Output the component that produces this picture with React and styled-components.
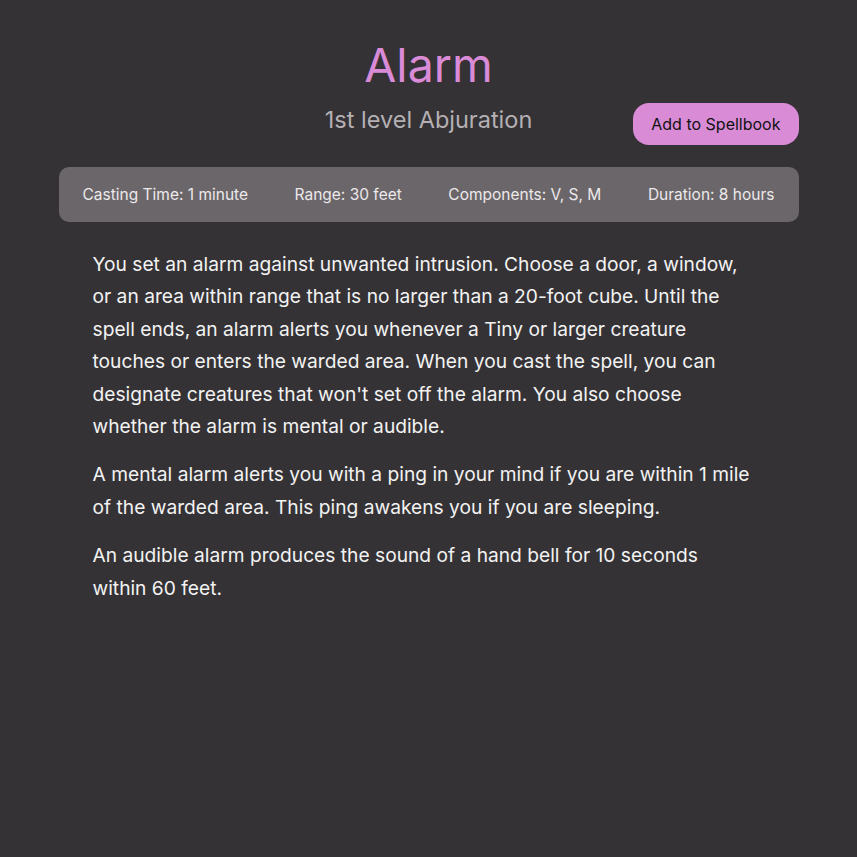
import styled, { createGlobalStyle } from 'styled-components';

const GlobalStyle = createGlobalStyle`
    body {
        margin: 0;
        background-color: #353236;
        font-family: 'Inter', 'Liberation Sans', sans-serif;
        color: #f2f2f2;
    }
`

const Page = styled.div`
    max-width: 740px;
    margin: 0 auto;
    padding-top: 36px;
`
const Header = styled.header`
    display: grid;
    grid-template-columns: 1fr auto 1fr;
    grid-template-rows: auto auto;
`
const Title = styled.h1`
    grid-column: 2;
    margin: 0;
    font-size: 46.5px;
    font-weight: 400;
    color: #da8bd7;
    text-align: center;
    line-height: 58px;
`
const Subtitle = styled.h2`
    grid-column: 2;
    grid-row: 2;
    margin: 12px 0 0;
    font-size: 23.5px;
    line-height: 28px;
    font-weight: 400;
    color: #b4b0b3;
    text-align: center;
`
const AddButton = styled.button`
    grid-column: 3;
    grid-row: 2;
    justify-self: end;
    align-self: start;
    margin-top: 9px;
    height: 42px;
    padding: 0 18px;
    border: 0;
    border-radius: 16px;
    background-color: #d98bd6;
    color: #111;
    font-family: inherit;
    font-size: 16px;
    cursor: pointer;
`
const Stats = styled.div`
    display: flex;
    justify-content: space-between;
    align-items: center;
    height: 55px;
    margin-top: 22px;
    padding: 0 24px;
    border-radius: 10px;
    background-color: #6b6669;
    font-size: 15.5px;
    color: #ece9eb;
`
const Description = styled.div`
    padding: 26px 44px 0 34px;

    p {
        margin: 0 0 16px;
        font-size: 19.2px;
        line-height: 32.4px;
    }
`

const stats = [
    'Casting Time: 1 minute',
    'Range: 30 feet',
    'Components: V, S, M',
    'Duration: 8 hours',
]

function App() {
    return (
        <>
            <GlobalStyle />
            <Page>
                <Header>
                    <Title>Alarm</Title>
                    <Subtitle>1st level Abjuration</Subtitle>
                    <AddButton>Add to Spellbook</AddButton>
                </Header>
                <Stats>
                    {stats.map((s) => (
                        <span key={s}>{s}</span>
                    ))}
                </Stats>
                <Description>
                    <p>You set an alarm against unwanted intrusion. Choose a door, a window, or an area within range that is no larger than a 20-foot cube. Until the spell ends, an alarm alerts you whenever a Tiny or larger creature touches or enters the warded area. When you cast the spell, you can designate creatures that won't set off the alarm. You also choose whether the alarm is mental or audible.</p>
                    <p>A mental alarm alerts you with a ping in your mind if you are within 1 mile of the warded area. This ping awakens you if you are sleeping.</p>
                    <p>An audible alarm produces the sound of a hand bell for 10 seconds within 60 feet.</p>
                </Description>
            </Page>
        </>
    )
}

export default App
